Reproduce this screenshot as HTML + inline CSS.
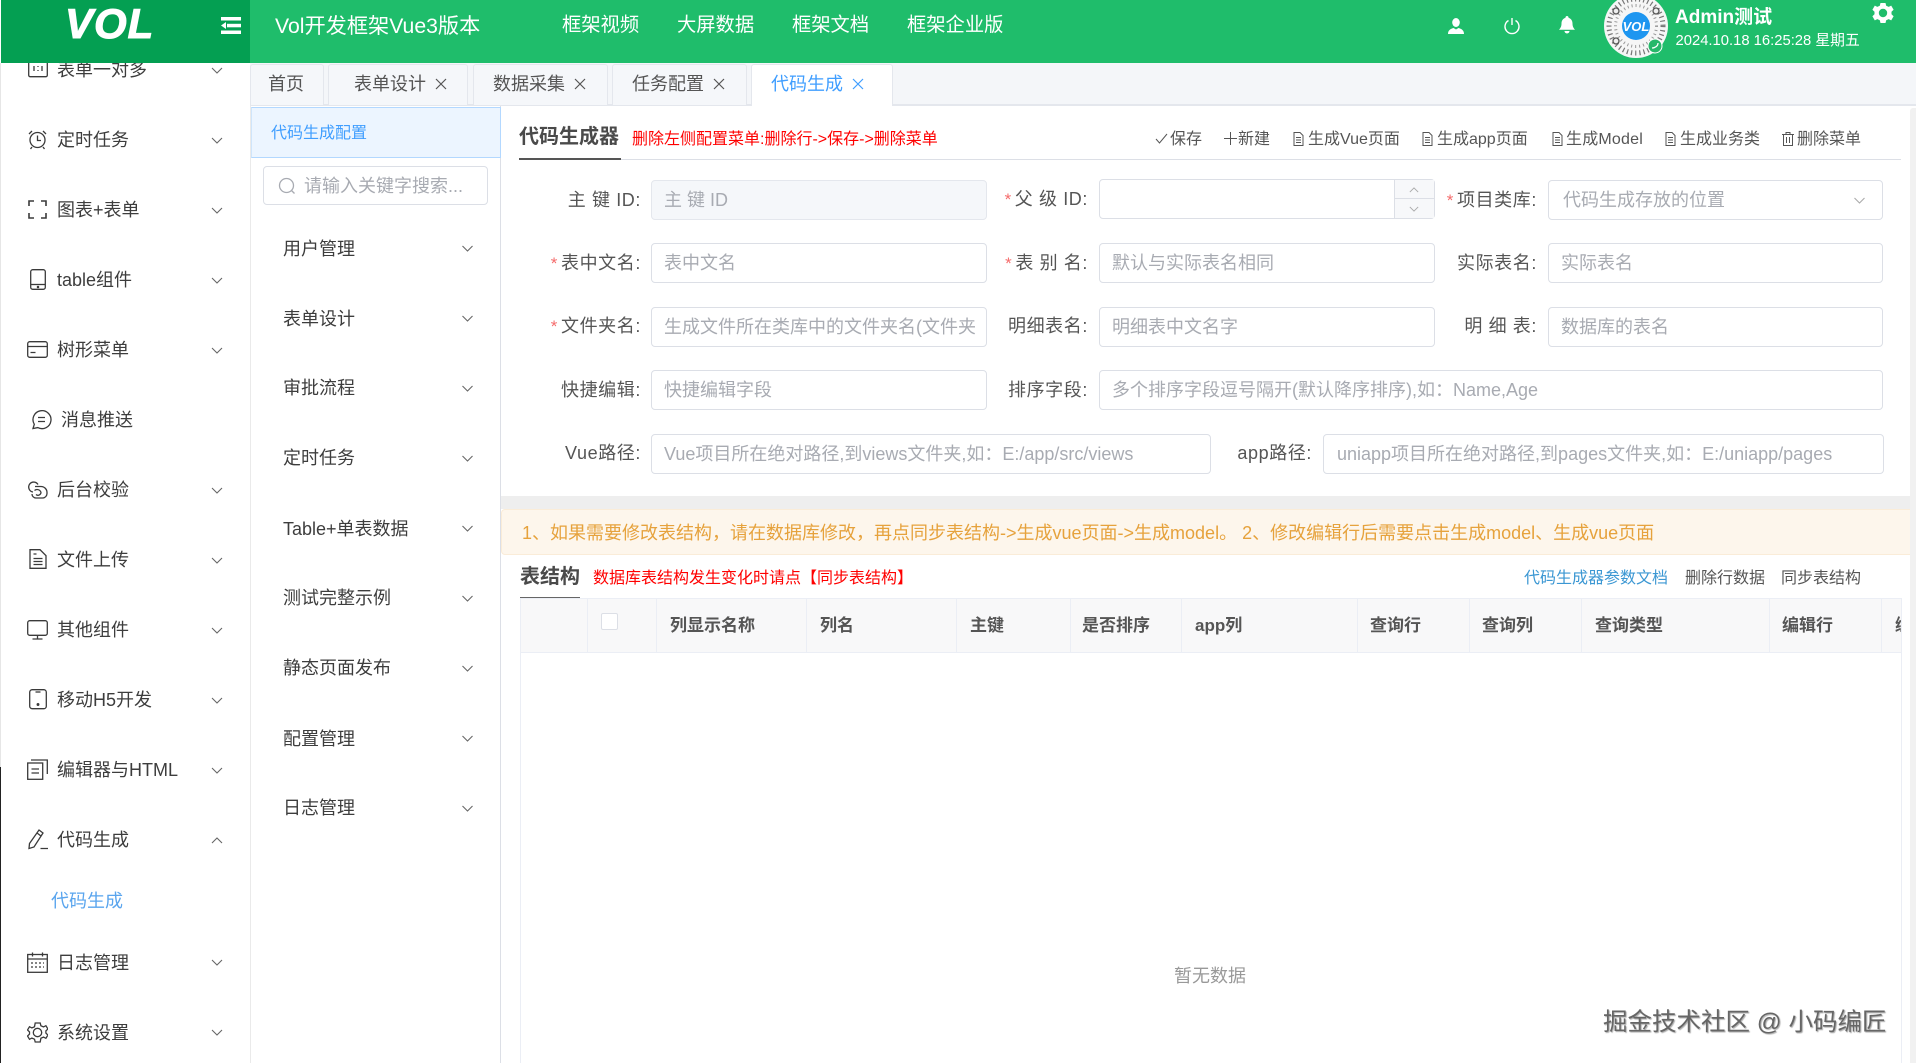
<!DOCTYPE html>
<html lang="zh"><head><meta charset="utf-8"><title>Vol</title>
<style>
html,body{margin:0;padding:0;background:#fff}
#p{position:relative;width:1916px;height:1063px;overflow:hidden;background:#fff;font-family:"Liberation Sans","Noto Sans CJK SC",sans-serif;color:#444;font-size:18px}
#p div,#p svg,#p span.a{position:absolute}
.t{white-space:nowrap;line-height:24px;height:24px}
.m{color:#3d3d3d}
.l{white-space:nowrap;line-height:24px;height:24px;width:130px;text-align:right;color:#555;letter-spacing:.6px}
.l i{font-style:normal;color:#f56c6c;font-size:17px;margin-right:3px}
.in{box-sizing:border-box;height:40px;border:1px solid #dcdfe6;border-radius:4px;background:#fff;color:#a8abb2;line-height:38px;padding:0 12px;white-space:nowrap;overflow:hidden}
.tab{box-sizing:border-box;top:64px;height:41px;background:#f5f7fa;border:1px solid #e4e7ed;border-bottom:0;border-radius:3px 3px 0 0}
.b{font-size:16px;color:#555;white-space:nowrap;line-height:20px;height:20px;top:130px}
.h{font-size:17px;font-weight:bold;color:#555;white-space:nowrap;line-height:22px;height:22px;top:615px}
.v{top:598px;height:54px;width:1px;background:#ebeef5}
.ic{fill:none;stroke:#3a3a3a;stroke-width:1.3}
.x{fill:none;stroke:#555;stroke-width:1.2}
.ch{fill:none;stroke:#666;stroke-width:1.1}
.cl{fill:none;stroke:#aaa;stroke-width:1.1}
.dc{fill:none;stroke:#555;stroke-width:1}
</style></head><body><div id="p">
<svg width="0" height="0" style="position:absolute"><defs>
<symbol id="c" viewBox="0 0 12 7"><path d="M1 1l5 5 5-5" class="ch"/></symbol>
<symbol id="u" viewBox="0 0 12 7"><path d="M1 6l5-5 5 5" class="ch"/></symbol>
<symbol id="cg" viewBox="0 0 12 7"><path d="M1 1l5 5 5-5" class="cl"/></symbol>
<symbol id="ug" viewBox="0 0 12 7"><path d="M1 6l5-5 5 5" class="cl"/></symbol>
<symbol id="xx" viewBox="0 0 12 12"><path d="M1 1l10 10M11 1L1 11" fill="none" stroke="currentColor" stroke-width="1.2"/></symbol>
<symbol id="doc" viewBox="0 0 11 14"><path d="M1 .5h6l3 3v10H1zM3 5.5h5M3 8h5M3 10.5h5" class="dc"/></symbol>
</defs></svg>

<!-- left edge -->
<div style="left:0;top:767px;width:1px;height:296px;background:#222"></div>
<div style="left:0;top:63px;width:1px;height:704px;background:#e6e6e6"></div>

<!-- sidebar -->
<div style="left:250px;top:63px;width:1px;height:1000px;background:#eaeaea"></div>
<svg style="left:28px;top:58px" width="20" height="20" viewBox="0 0 20 20" class="ic"><rect x=".7" y=".7" width="18.6" height="18" rx="1.5"/><path d="M6 8v5M10 8v1M10 12v1M14 8v5"/></svg>
<div class="t m" style="left:57px;top:58px">表单一对多</div>
<svg style="left:211px;top:67px" width="12" height="7"><use href="#c"/></svg>

<svg style="left:27px;top:129px" width="21" height="21" viewBox="0 0 21 21" class="ic"><circle cx="10.5" cy="11" r="7.5"/><path d="M10.5 6.5V11.5H14M2 5l3-3M19 5l-3-3M5 18l-1.5 2M16 18l1.5 2"/></svg>
<div class="t m" style="left:57px;top:128px">定时任务</div>
<svg style="left:211px;top:137px" width="12" height="7"><use href="#c"/></svg>

<svg style="left:28px;top:200px" width="19" height="19" viewBox="0 0 19 19" fill="none" stroke="#3a3a3a" stroke-width="1.6"><path d="M1 6V1h5M13 1h5v5M18 13v5h-5M6 18H1v-5"/></svg>
<div class="t m" style="left:57px;top:198px">图表+表单</div>
<svg style="left:211px;top:207px" width="12" height="7"><use href="#c"/></svg>

<svg style="left:30px;top:269px" width="16" height="21" viewBox="0 0 16 21" class="ic"><rect x=".7" y=".7" width="14.6" height="19.6" rx="2"/><path d="M1 15.5h14"/><circle cx="8" cy="18" r=".6"/></svg>
<div class="t m" style="left:57px;top:268px">table组件</div>
<svg style="left:211px;top:277px" width="12" height="7"><use href="#c"/></svg>

<svg style="left:27px;top:341px" width="21" height="17" viewBox="0 0 21 17" class="ic"><rect x=".7" y=".7" width="19.6" height="15.6" rx="2"/><path d="M1 5.5h19M3.5 11.5h5"/></svg>
<div class="t m" style="left:57px;top:338px">树形菜单</div>
<svg style="left:211px;top:347px" width="12" height="7"><use href="#c"/></svg>

<svg style="left:31px;top:410px" width="21" height="20" viewBox="0 0 21 20" class="ic"><path d="M2 18.5l1.3-4.2A9 9 0 1 1 6.8 17.6z"/><path d="M7 7.5h7M7 11.5h7"/></svg>
<div class="t m" style="left:61px;top:408px">消息推送</div>

<svg style="left:27px;top:481px" width="21" height="18" viewBox="0 0 21 18" class="ic"><path d="M6 11A5 5 0 1 1 11 3.500"/><path d="M8 5.500h6a6 6 0 0 1 6 6v1a4.500 4.500 0 0 1-4.500 4.500H9a4 4 0 0 1-4-4"/><path d="M7.500 9.500a4 4 0 0 1 6.500 2 3 3 0 0 1-5 2"/></svg>
<div class="t m" style="left:57px;top:478px">后台校验</div>
<svg style="left:211px;top:487px" width="12" height="7"><use href="#c"/></svg>

<svg style="left:29px;top:549px" width="18" height="20" viewBox="0 0 18 20" class="ic"><path d="M1 .7h10l6 6v12.600H1zM4.500 9.500h9M4.500 12.500h9M4.500 15.500h9M4.500 5h3"/></svg>
<div class="t m" style="left:57px;top:548px">文件上传</div>
<svg style="left:211px;top:557px" width="12" height="7"><use href="#c"/></svg>

<svg style="left:27px;top:620px" width="21" height="20" viewBox="0 0 21 20" class="ic"><rect x=".7" y=".7" width="19.600" height="14.600" rx="2"/><path d="M10.500 15.500v3.500M5.500 19h10"/></svg>
<div class="t m" style="left:57px;top:618px">其他组件</div>
<svg style="left:211px;top:627px" width="12" height="7"><use href="#c"/></svg>

<svg style="left:29px;top:689px" width="18" height="21" viewBox="0 0 18 21" class="ic"><rect x=".7" y=".7" width="16.600" height="19" rx="2.500"/><path d="M6.500 3h5"/><circle cx="9" cy="15.500" r=".8" fill="#3a3a3a"/></svg>
<div class="t m" style="left:57px;top:688px">移动H5开发</div>
<svg style="left:211px;top:697px" width="12" height="7"><use href="#c"/></svg>

<svg style="left:27px;top:759px" width="21" height="21" viewBox="0 0 21 21" class="ic"><rect x=".7" y="4" width="15" height="16.300"/><path d="M4 1h16.300v14M4.500 10h7.500M4.500 14h7.500"/></svg>
<div class="t m" style="left:57px;top:758px">编辑器与HTML</div>
<svg style="left:211px;top:767px" width="12" height="7"><use href="#c"/></svg>

<svg style="left:28px;top:829px" width="20" height="21" viewBox="0 0 20 21" class="ic"><path d="M11 1l4 3-9 14-5 1.500.500-5zM12.500 19.500H20M9 4l4 3"/></svg>
<div class="t m" style="left:57px;top:828px">代码生成</div>
<svg style="left:211px;top:837px" width="12" height="7"><use href="#u"/></svg>

<div class="t" style="left:51px;top:889px;color:#5aa5ee">代码生成</div>

<svg style="left:27px;top:952px" width="21" height="21" viewBox="0 0 21 21" class="ic"><rect x=".7" y="2.500" width="19.600" height="17.800"/><path d="M.7 7h19.600M5.500 .5v4M15.500 .5v4"/><path d="M4 11h13M4 15h13" stroke-dasharray="2 2"/></svg>
<div class="t m" style="left:57px;top:951px">日志管理</div>
<svg style="left:211px;top:959px" width="12" height="7"><use href="#c"/></svg>

<svg style="left:27px;top:1022px" width="21" height="21" viewBox="0 0 21 21" class="ic"><path d="M8 1h5l.700 2.800 2.600 1.100 2.400-1.200 2 3.300-2 1.900v2.200l2 1.900-2 3.300-2.400-1.200-2.600 1.100L13 20H8l-.700-2.800-2.600-1.100-2.400 1.200-2-3.300 2-1.900V9.900l-2-1.900 2-3.300 2.400 1.200 2.600-1.100z" transform="translate(.2 0)"/><circle cx="10.500" cy="10.500" r="4.200"/></svg>
<div class="t m" style="left:57px;top:1021px">系统设置</div>
<svg style="left:211px;top:1029px" width="12" height="7"><use href="#c"/></svg>

<!-- panel -->
<div style="left:500px;top:106px;width:1px;height:957px;background:#dcdfe6"></div>
<div style="box-sizing:border-box;left:251px;top:107px;width:250px;height:51px;background:#ecf5ff;border:1px solid #b3d8ff;border-left-color:#cfe5fb"></div>
<div class="t" style="left:271px;top:122px;font-size:16px;color:#409eff">代码生成配置</div>
<div style="box-sizing:border-box;left:263px;top:166px;width:225px;height:39px;border:1px solid #dcdfe6;border-radius:4px"></div>
<svg style="left:278px;top:177px" width="18" height="18" viewBox="0 0 18 18" fill="none" stroke="#a8abb2" stroke-width="1.300"><circle cx="8.500" cy="8.500" r="7"/><path d="M13.500 13.500l3 3"/></svg>
<div class="t" style="left:304px;top:174px;color:#a8abb2">请输入关键字搜索...</div>
<div class="t m" style="left:283px;top:237px">用户管理</div><svg style="left:461px;top:245px" width="13" height="7"><use href="#c"/></svg>
<div class="t m" style="left:283px;top:307px">表单设计</div><svg style="left:461px;top:315px" width="13" height="7"><use href="#c"/></svg>
<div class="t m" style="left:283px;top:376px">审批流程</div><svg style="left:461px;top:385px" width="13" height="7"><use href="#c"/></svg>
<div class="t m" style="left:283px;top:446px">定时任务</div><svg style="left:461px;top:455px" width="13" height="7"><use href="#c"/></svg>
<div class="t m" style="left:283px;top:517px">Table+单表数据</div><svg style="left:461px;top:525px" width="13" height="7"><use href="#c"/></svg>
<div class="t m" style="left:283px;top:586px">测试完整示例</div><svg style="left:461px;top:595px" width="13" height="7"><use href="#c"/></svg>
<div class="t m" style="left:283px;top:656px">静态页面发布</div><svg style="left:461px;top:665px" width="13" height="7"><use href="#c"/></svg>
<div class="t m" style="left:283px;top:727px">配置管理</div><svg style="left:461px;top:735px" width="13" height="7"><use href="#c"/></svg>
<div class="t m" style="left:283px;top:796px">日志管理</div><svg style="left:461px;top:805px" width="13" height="7"><use href="#c"/></svg>

<!-- tabs -->
<div style="left:250px;top:63px;width:1666px;height:42px;background:#f4f6f9"></div>
<div style="left:250px;top:104px;width:1666px;height:2px;background:#e4e7ed"></div>
<div class="tab" style="left:250px;width:74px"></div>
<div class="t" style="left:268px;top:72px;color:#555">首页</div>
<div class="tab" style="left:328px;width:140px"></div>
<div class="t" style="left:354px;top:72px;color:#555">表单设计</div>
<svg style="left:435px;top:78px;color:#555" width="12" height="12"><use href="#xx"/></svg>
<div class="tab" style="left:473px;width:135px"></div>
<div class="t" style="left:493px;top:72px;color:#555">数据采集</div>
<svg style="left:574px;top:78px;color:#555" width="12" height="12"><use href="#xx"/></svg>
<div class="tab" style="left:612px;width:135px"></div>
<div class="t" style="left:632px;top:72px;color:#555">任务配置</div>
<svg style="left:713px;top:78px;color:#555" width="12" height="12"><use href="#xx"/></svg>
<div class="tab" style="left:751px;width:142px;height:42px;background:#fff"></div>
<div class="t" style="left:771px;top:72px;color:#409eff">代码生成</div>
<svg style="left:852px;top:78px;color:#409eff" width="12" height="12"><use href="#xx"/></svg>

<!-- toolbar -->
<div style="left:519px;top:159px;width:1382px;height:1px;background:#dcdfe6"></div>
<div style="left:519px;top:158px;width:102px;height:2px;background:#555"></div>
<div class="t" style="left:519px;top:125px;font-size:20px;font-weight:bold;color:#4a4a4a">代码生成器</div>
<div class="t" style="left:632px;top:128px;font-size:16px;color:#f00">删除左侧配置菜单:删除行-&gt;保存-&gt;删除菜单</div>
<svg style="left:1155px;top:133px" width="13" height="11" viewBox="0 0 13 11"><path d="M1 6l3.500 4L12 1" class="dc"/></svg>
<div class="b" style="left:1170px">保存</div>
<svg style="left:1224px;top:132px" width="13" height="13" viewBox="0 0 13 13"><path d="M6.500 0v13M0 6.500h13" class="dc"/></svg>
<div class="b" style="left:1238px">新建</div>
<svg style="left:1293px;top:132px" width="11" height="14"><use href="#doc"/></svg>
<div class="b" style="left:1308px">生成Vue页面</div>
<svg style="left:1422px;top:132px" width="11" height="14"><use href="#doc"/></svg>
<div class="b" style="left:1437px">生成app页面</div>
<svg style="left:1552px;top:132px" width="11" height="14"><use href="#doc"/></svg>
<div class="b" style="left:1566px;letter-spacing:.2px">生成Model</div>
<svg style="left:1665px;top:132px" width="11" height="14"><use href="#doc"/></svg>
<div class="b" style="left:1680px">生成业务类</div>
<svg style="left:1782px;top:132px" width="12" height="14" viewBox="0 0 12 14"><path d="M0 2.500h12M4 2.500V.5h4v2M1.500 2.500v11h9v-11M4.500 5v6M7.500 5v6" class="dc"/></svg>
<div class="b" style="left:1797px">删除菜单</div>

<!-- form row 1 -->
<div class="l" style="left:511px;top:188px">主 键 ID:</div>
<div class="in" style="left:651px;top:180px;width:336px;background:#f5f7fa;border-color:#e4e7ed">主 键 ID</div>
<div class="l" style="left:958px;top:187px"><i>*</i>父 级 ID:</div>
<div class="in" style="left:1099px;top:179px;width:336px"></div>
<div style="left:1394px;top:180px;width:1px;height:38px;background:#dcdfe6"></div>
<div style="left:1394px;top:198px;width:40px;height:1px;background:#dcdfe6"></div>
<div style="left:1395px;top:180px;width:39px;height:18px;background:#f7f8fa"></div>
<div style="left:1395px;top:199px;width:39px;height:19px;background:#f7f8fa"></div>
<svg style="left:1409px;top:187px" width="10" height="6"><use href="#ug"/></svg>
<svg style="left:1409px;top:206px" width="10" height="6"><use href="#cg"/></svg>
<div class="l" style="left:1407px;top:188px"><i>*</i>项目类库:</div>
<div class="in" style="left:1548px;top:180px;width:335px;color:#a8abb2;padding-left:14px">代码生成存放的位置</div>
<svg style="left:1853px;top:197px" width="13" height="7"><use href="#cg"/></svg>

<!-- row 2 -->
<div class="l" style="left:511px;top:251px"><i>*</i>表中文名:</div>
<div class="in" style="left:651px;top:243px;width:336px">表中文名</div>
<div class="l" style="left:958px;top:251px"><i>*</i>表 别 名:</div>
<div class="in" style="left:1099px;top:243px;width:336px">默认与实际表名相同</div>
<div class="l" style="left:1407px;top:251px">实际表名:</div>
<div class="in" style="left:1548px;top:243px;width:335px">实际表名</div>

<!-- row 3 -->
<div class="l" style="left:511px;top:314px"><i>*</i>文件夹名:</div>
<div class="in" style="left:651px;top:307px;width:336px">生成文件所在类库中的文件夹名(文件夹</div>
<div class="l" style="left:958px;top:314px">明细表名:</div>
<div class="in" style="left:1099px;top:307px;width:336px">明细表中文名字</div>
<div class="l" style="left:1407px;top:314px">明 细 表:</div>
<div class="in" style="left:1548px;top:307px;width:335px">数据库的表名</div>

<!-- row 4 -->
<div class="l" style="left:511px;top:378px">快捷编辑:</div>
<div class="in" style="left:651px;top:370px;width:336px">快捷编辑字段</div>
<div class="l" style="left:958px;top:378px">排序字段:</div>
<div class="in" style="left:1099px;top:370px;width:784px">多个排序字段逗号隔开(默认降序排序),如：Name,Age</div>

<!-- row 5 -->
<div class="l" style="left:511px;top:441px">Vue路径:</div>
<div class="in" style="left:651px;top:434px;width:560px">Vue项目所在绝对路径,到views文件夹,如：E:/app/src/views</div>
<div class="l" style="left:1182px;top:441px">app路径:</div>
<div class="in" style="left:1323px;top:434px;width:561px;padding-left:13px">uniapp项目所在绝对路径,到pages文件夹,如：E:/uniapp/pages</div>

<!-- alert -->
<div style="left:501px;top:496px;width:1415px;height:13px;background:#eeeeee"></div>
<div style="box-sizing:border-box;left:501px;top:509px;width:1415px;height:46px;background:#fdf6ec;border:1px solid #faecd8;border-radius:4px"></div>
<div class="t" style="left:522px;top:521px;color:#e6a23c">1、如果需要修改表结构，请在数据库修改，再点同步表结构-&gt;生成vue页面-&gt;生成model。 2、修改编辑行后需要点击生成model、生成vue页面</div>

<!-- table head -->
<div class="t" style="left:520px;top:565px;font-size:20px;font-weight:bold;color:#4a4a4a">表结构</div>
<div class="t" style="left:593px;top:567px;font-size:16px;color:#f00">数据库表结构发生变化时请点【同步表结构】</div>
<div class="t" style="left:1524px;top:567px;font-size:16px;color:#3b97d3">代码生成器参数文档</div>
<div class="t" style="left:1685px;top:567px;font-size:16px;color:#555">删除行数据</div>
<div class="t" style="left:1781px;top:567px;font-size:16px;color:#555">同步表结构</div>
<div style="left:520px;top:597px;width:60px;height:1px;background:#666"></div>

<div style="box-sizing:border-box;left:520px;top:598px;width:1382px;height:465px;border:1px solid #ebeef5;border-bottom:0;overflow:hidden">
<div style="left:0;top:0;width:1380px;height:53px;background:#f8f8f9;border-bottom:1px solid #ebeef5"></div>
<div class="h" style="left:1374px;top:16px">编辑类型</div>
</div>
<div class="v" style="left:587px"></div><div class="v" style="left:656px"></div><div class="v" style="left:806px"></div><div class="v" style="left:956px"></div><div class="v" style="left:1070px"></div><div class="v" style="left:1181px"></div><div class="v" style="left:1357px"></div><div class="v" style="left:1469px"></div><div class="v" style="left:1581px"></div><div class="v" style="left:1769px"></div><div class="v" style="left:1881px"></div>
<div style="box-sizing:border-box;left:601px;top:613px;width:17px;height:17px;border:1px solid #dcdfe6;border-radius:2px;background:#fff"></div>
<div class="h" style="left:670px">列显示名称</div>
<div class="h" style="left:820px">列名</div>
<div class="h" style="left:970px">主键</div>
<div class="h" style="left:1082px">是否排序</div>
<div class="h" style="left:1195px">app列</div>
<div class="h" style="left:1370px">查询行</div>
<div class="h" style="left:1482px">查询列</div>
<div class="h" style="left:1595px">查询类型</div>
<div class="h" style="left:1782px">编辑行</div>
<div class="t" style="left:1174px;top:964px;color:#999">暂无数据</div>
<div class="t" style="left:1603px;top:1009px;height:28px;line-height:28px;font-size:24.500px;color:#666;text-shadow:1px 1px 1px #aaa">掘金技术社区 @ 小码编匠</div>

<!-- scrollbar -->
<div style="left:1910px;top:108px;width:6px;height:955px;background:#f1f1f1;border-radius:3px 0 0 0"></div>

<!-- header -->
<div style="left:250px;top:0;width:1666px;height:63px;background:#1fbd6b"></div>
<div style="left:1px;top:0;width:249px;height:63px;background:#049f52"></div>
<div class="t" style="left:65px;top:2px;height:44px;line-height:44px;font-size:42px;font-weight:bold;font-style:italic;color:#fff;letter-spacing:1px;-webkit-text-stroke:1px #fff">VOL</div>
<svg style="left:221px;top:17px" width="20" height="17" viewBox="0 0 20 17" fill="#fff"><rect width="20" height="3.500"/><rect y="13.500" width="20" height="3.500"/><rect x="6" y="6.800" width="14" height="3.500"/><path d="M0 8.500l5-3.500v7z"/></svg>
<div class="t" style="left:275px;top:15px;font-size:21.200px;color:#fff">Vol开发框架Vue3版本</div>
<div class="t" style="left:562px;top:14px;font-size:19.300px;color:#fff">框架视频</div>
<div class="t" style="left:677px;top:14px;font-size:19.300px;color:#fff">大屏数据</div>
<div class="t" style="left:792px;top:14px;font-size:19.300px;color:#fff">框架文档</div>
<div class="t" style="left:907px;top:14px;font-size:19.300px;color:#fff">框架企业版</div>
<svg style="left:1448px;top:18px" width="16" height="16" viewBox="0 0 16 16" fill="#fff"><ellipse cx="8" cy="4.500" rx="3.800" ry="4.500"/><path d="M0 16c0-3.500 2-5 5.500-6L8 11.500 10.500 10c3.500 1 5.500 2.500 5.500 6z"/></svg>
<svg style="left:1504px;top:17px" width="16" height="18" viewBox="0 0 16 18" fill="none" stroke="#fff" stroke-width="1.400"><path d="M8 1v7M4.500 3.500a7 7 0 1 0 7 0"/></svg>
<svg style="left:1559px;top:16px" width="16" height="18" viewBox="0 0 16 18" fill="#fff"><path d="M8 0a1.500 1.500 0 0 1 1.500 1.700C12 2.500 13.500 4.500 13.500 7.500c0 3 1 4.500 2.500 6.300H0c1.500-1.800 2.500-3.300 2.500-6.300 0-3 1.500-5 4-5.800A1.500 1.500 0 0 1 8 0zM5.500 15h5a2.500 2.500 0 0 1-5 0z"/></svg>
<svg style="left:1604px;top:-6px" width="64" height="64" viewBox="0 0 64 64">
<circle cx="32" cy="32" r="32" fill="#f6f6f6"/>
<circle cx="32" cy="32" r="27" fill="none" stroke="#777" stroke-width="5" stroke-dasharray="1.200 3"/>
<circle cx="32" cy="32" r="20.500" fill="none" stroke="#999" stroke-width="3" stroke-dasharray="1 3"/>
<circle cx="12" cy="17" r="3" fill="#eee" stroke="#555" stroke-width="1.300"/>
<circle cx="52" cy="17" r="3" fill="#eee" stroke="#555" stroke-width="1.300"/>
<circle cx="12" cy="47" r="3" fill="#eee" stroke="#555" stroke-width="1.300"/>
<circle cx="32" cy="32" r="14" fill="#1e96f0"/>
<text x="32" y="37" text-anchor="middle" font-family="Liberation Sans" font-weight="bold" font-style="italic" font-size="13" fill="#fff">VOL</text>
<circle cx="51" cy="52" r="7" fill="#27b86a" stroke="#fff" stroke-width="1"/>
<path d="M48 54c3 0 6-2 6-5" fill="none" stroke="#fff" stroke-width="1.300"/>
</svg>
<div class="t" style="left:1675px;top:6px;font-size:19px;font-weight:bold;color:#fff">Admin测试</div>
<div class="t" style="left:1675.500px;top:29px;font-size:14.800px;color:#fff">2024.10.18 16:25:28 星期五</div>
<svg style="left:1872px;top:2px" width="22" height="22" viewBox="0 0 22 22"><path d="M8.500 1h5l.7 2.800 2.500 1.100 2.500-1.300 2.400 4.200-2.100 1.900v2.600l2.100 1.900-2.400 4.200-2.500-1.300-2.500 1.100-.7 2.800h-5l-.7-2.800-2.500-1.100-2.500 1.300L.4 14.200l2.100-1.900V9.700L.4 7.800l2.400-4.200 2.500 1.300 2.500-1.100z" fill="#fff"/><circle cx="11" cy="11" r="4.200" fill="#1fbd6b"/></svg>
</div></body></html>
